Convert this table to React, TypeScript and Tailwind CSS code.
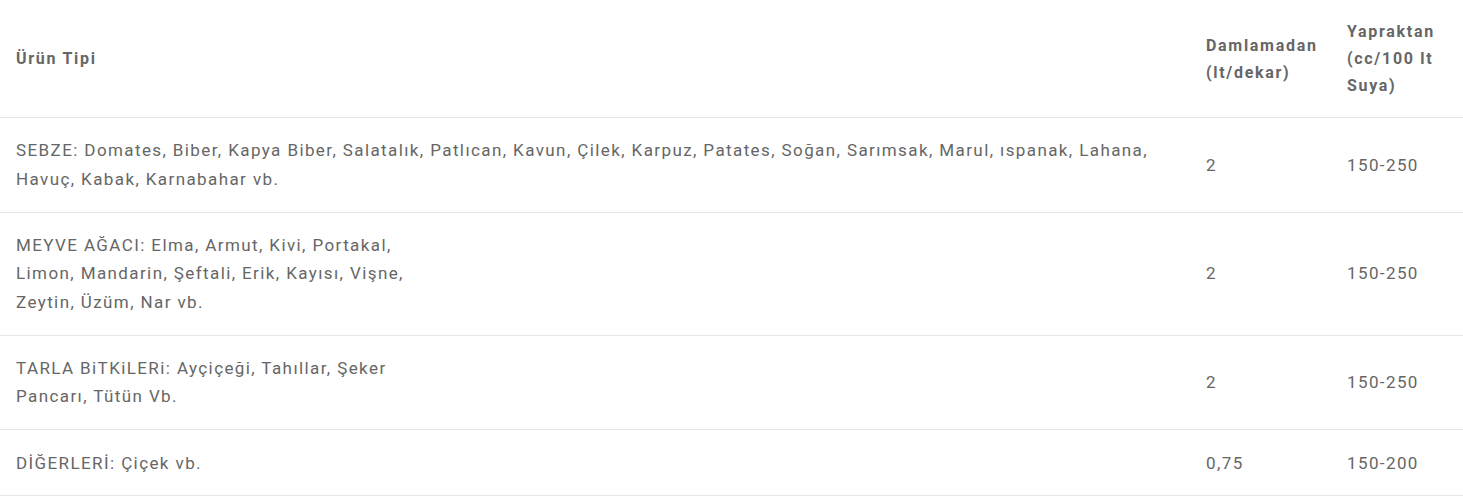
import React from 'react';

interface Row {
  id: string;
  lines: string[];
  drip: string;
  leaf: string;
}

const rows: Row[] = [
  {
    id: 'sebze',
    lines: [
      'SEBZE: Domates, Biber, Kapya Biber, Salatalık, Patlıcan, Kavun, Çilek, Karpuz, Patates, Soğan, Sarımsak, Marul, ıspanak, Lahana, Havuç, Kabak, Karnabahar vb.'
    ],
    drip: '2',
    leaf: '150-250'
  },
  {
    id: 'meyve',
    lines: ['MEYVE AĞACI: Elma, Armut, Kivi, Portakal,', 'Limon, Mandarin, Şeftali, Erik, Kayısı, Vişne,', 'Zeytin, Üzüm, Nar vb.'],
    drip: '2',
    leaf: '150-250'
  },
  {
    id: 'tarla',
    lines: ['TARLA BiTKiLERi: Ayçiçeği, Tahıllar, Şeker', 'Pancarı, Tütün Vb.'],
    drip: '2',
    leaf: '150-250'
  },
  {
    id: 'diger',
    lines: ['DİĞERLERİ: Çiçek vb.'],
    drip: '0,75',
    leaf: '150-200'
  }
];

const thClass = 'px-4 py-[18px] text-left align-middle text-base font-bold leading-[27px] tracking-[1.7px]';
const tdClass = 'px-4 py-[18.4px] align-middle text-[17px] leading-[28.4px] tracking-[1.4px]';

const App: React.FC = () => {
  return (
    <div className="w-full bg-white font-['Roboto',sans-serif] text-[#666666]">
      <table className="w-full table-fixed border-collapse">
        <thead>
          <tr className="border-b border-[#e6e6e6]">
            <th className={thClass}>Ürün Tipi</th>
            <th className={`w-[141px] ${thClass}`}>Damlamadan (lt/dekar)</th>
            <th className={`w-[132px] ${thClass}`}>Yapraktan (cc/100 lt Suya)</th>
          </tr>
        </thead>
        <tbody>
          {rows.map((row) => (
            <tr key={row.id} className="border-b border-[#e6e6e6]">
              <td className={tdClass}>
                {row.lines.map((line, i) => (
                  <React.Fragment key={i}>
                    {i > 0 && <br />}
                    {line}
                  </React.Fragment>
                ))}
              </td>
              <td className={tdClass}>{row.drip}</td>
              <td className={tdClass}>{row.leaf}</td>
            </tr>
          ))}
        </tbody>
      </table>
    </div>
  );
};

export default App;
